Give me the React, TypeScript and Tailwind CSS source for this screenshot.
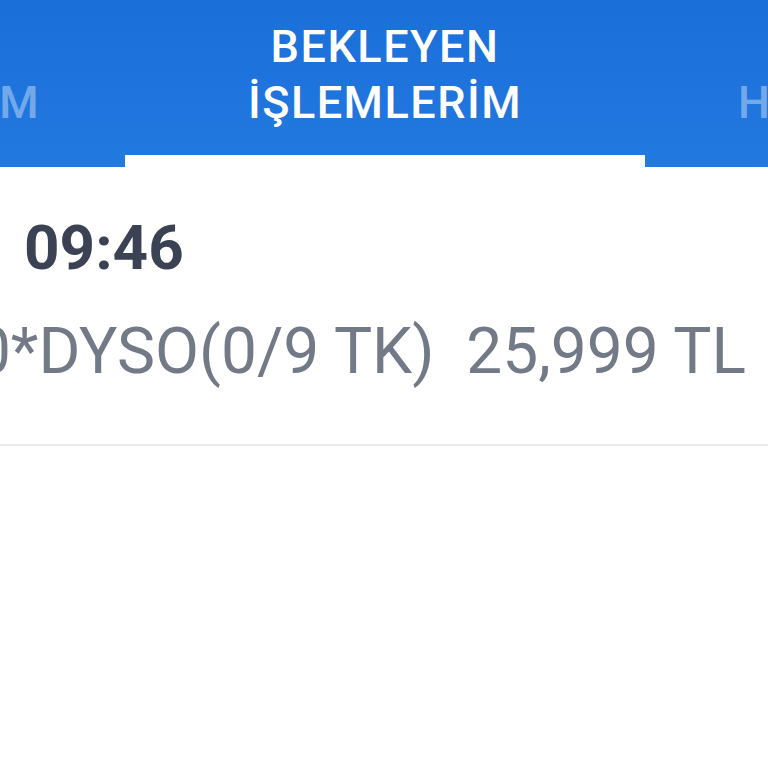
import React from "react"

const font = { fontFamily: "Roboto, 'Noto Sans', sans-serif" }

function Tabs() {
  return (
    <div className="flex h-[167px] w-full overflow-hidden bg-gradient-to-b from-[#1a6fd8] to-[#2279e0]">
      <div className="flex w-[125px] shrink-0 flex-col items-end justify-center pb-[18px] pr-[85px] text-[45px] font-medium leading-[56px] tracking-[1.5px] text-white/40">
        <span className="whitespace-nowrap">&nbsp;</span>
        <span className="whitespace-nowrap">İŞLEMLERİM</span>
      </div>
      <div className="flex w-[520px] shrink-0 flex-col">
        <div className="flex flex-1 flex-col items-center justify-center pb-[6px] text-[45px] font-medium leading-[56px] tracking-[1.5px] text-white">
          <span className="whitespace-nowrap">BEKLEYEN</span>
          <span className="whitespace-nowrap">İŞLEMLERİM</span>
        </div>
        <div className="h-[12px] bg-white" />
      </div>
      <div className="flex flex-1 flex-col items-start justify-center pb-[18px] pl-[93px] text-[45px] font-medium leading-[56px] tracking-[1.5px] text-white/40">
        <span className="whitespace-nowrap">&nbsp;</span>
        <span className="whitespace-nowrap">HAREKETLERİM</span>
      </div>
    </div>
  )
}

function OrderRow() {
  return (
    <div className="overflow-hidden border-b-[2px] border-[#ebebeb] pb-[52px] pt-[41px]">
      <div className="pl-[24px] text-[62px] font-bold leading-[80px] text-[#3b4254]">09:46</div>
      <div className="mt-[24px] flex justify-end pr-[22px] text-[64px] leading-[80px] text-[#737a87]">
        <span className="whitespace-nowrap">10*DYSO(0/9 TK)&nbsp;&nbsp;25,999 TL</span>
      </div>
    </div>
  )
}

export default function App() {
  return (
    <div className="h-[768px] w-[768px] overflow-hidden bg-white" style={font}>
      <Tabs />
      <OrderRow />
    </div>
  )
}
